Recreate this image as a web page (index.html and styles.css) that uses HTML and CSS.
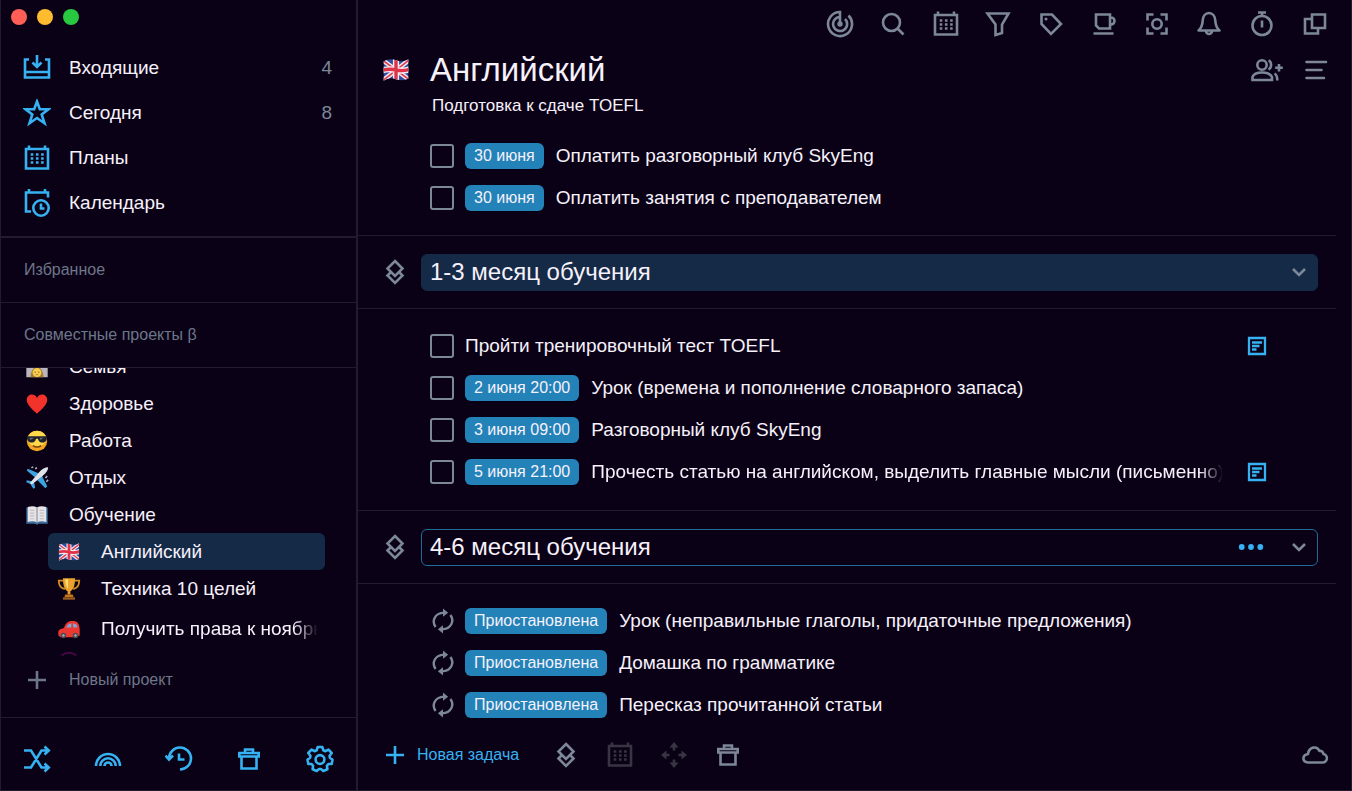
FILE: index.html
```html
<!DOCTYPE html>
<html lang="ru">
<head>
<meta charset="utf-8">
<title>Английский</title>
<link rel="stylesheet" href="styles.css">
</head>
<body>
<svg class="sprite" aria-hidden="true">
  <clipPath id="flag-shape"><path d="M3 6.500Q8 3.500 14 5.500T25 4.500V21.500Q20 24 14 22T3 23.500Z"/></clipPath>
  <symbol id="i-inbox" viewBox="0 0 28 28"><path d="M6 5.500H2V23.500H26V5.500H22M2 18H26M14 1V12.500M9.500 8.500L14 13L18.500 8.500"/></symbol>
  <symbol id="i-star" viewBox="0 0 28 28"><path d="M14 2.500L16.800 10.300H25.500L18.700 15.500L21.500 24.300L14 19L6.500 24.300L9.300 15.500L2.500 10.300H11.200Z"/></symbol>
  <symbol id="i-calendar" viewBox="0 0 28 28"><path d="M3 5H25V24.500H3ZM6 5V1.500M22 5V1.500"/><path d="M7.700 10.500H20.700M7.700 14.500H20.700M7.700 18.500H20.700" stroke-width="2.600" stroke-dasharray="2.600 2.600"/></symbol>
  <symbol id="i-calclock" viewBox="0 0 28 28"><path d="M8 22.500H3V3.500H25V8.500M6 3.500V0M22 3.500V0"/><circle cx="18" cy="19" r="7.700"/><path d="M18 14.500V19.500H21.500"/></symbol>
  <symbol id="i-plus" viewBox="0 0 28 28"><path d="M14 5V23M5 14H23"/></symbol>
  <symbol id="i-shuffle" viewBox="0 0 28 28"><path d="M1 5.500H8L18.500 22.500H26M1 22.500H8L18.500 5.500H26M21.500 1.500L25.700 5.500L21.500 9.500M21.500 18.500L25.700 22.500L21.500 26.500"/></symbol>
  <symbol id="i-rainbow" viewBox="0 0 28 28"><path d="M2 21A12 12 0 0 1 26 21M6.300 21A7.700 7.700 0 0 1 21.700 21M10.500 21A3.500 3.500 0 0 1 17.500 21"/></symbol>
  <symbol id="i-history" viewBox="0 0 28 28"><path d="M4 14A11 11 0 1 1 15 24.500M0.500 10.500L4 14.500L8 10.500M14 8.500V14.500H19.500"/></symbol>
  <symbol id="i-trash" viewBox="0 0 28 28"><path d="M10 7.500V4.500H18V7.500M4.300 8H23.700V11.500H4.300ZM6.500 12V23.500H21.500V12"/></symbol>
  <symbol id="i-gear" viewBox="0 0 28 28"><path d="M11.700 2H16.300L17.300 5.300L19.500 6.200L22.500 4.600L25.700 8L23.500 11L24 13L26.500 14.500L25.700 19H22.400L20.900 20.800L21.400 24.300L17.300 26L14.900 24H13.100L10.700 26L6.600 24.300L7.100 20.800L5.600 19H2.300L1.500 14.500L4 13L4.500 11L2.300 8L5.500 4.600L8.500 6.200L10.700 5.300Z" stroke-linejoin="round"/><circle cx="14" cy="14.500" r="4.400"/></symbol>
  <symbol id="i-target" viewBox="0 0 28 28"><path d="M14 14V2A12 12 0 1 0 22.500 5.500M14 7A7 7 0 1 0 19 9"/><circle cx="14" cy="14" r="2.700" fill="currentColor" stroke="none"/></symbol>
  <symbol id="i-search" viewBox="0 0 28 28"><circle cx="12.500" cy="12.500" r="8.500"/><path d="M18.500 18.500L24.500 24.500"/></symbol>
  <symbol id="i-filter" viewBox="0 0 28 28"><path d="M3.500 3.500H24.500L18 14.500V23L11.500 25V14.500Z"/></symbol>
  <symbol id="i-tag" viewBox="0 0 28 28"><path d="M4.500 4.500H15L24 14L14 24L4.500 14Z"/><circle cx="9" cy="9" r="1.500" fill="currentColor" stroke="none"/></symbol>
  <symbol id="i-cup" viewBox="0 0 28 28"><path d="M6 4.500H20V18.500H9L6 15.500ZM20 7.500H21A3.500 3.500 0 0 1 21 14.500H20M3.500 23.500H23.500"/></symbol>
  <symbol id="i-focus" viewBox="0 0 28 28"><path d="M4.500 10.500V4.500H10.500M17.500 4.500H23.500V10.500M23.500 17.500V23.500H17.500M10.500 23.500H4.500V17.500"/><circle cx="14" cy="14" r="4.700"/></symbol>
  <symbol id="i-bell" viewBox="0 0 28 28"><path d="M3.500 20.500H24.500C21 17.500 20.500 15 20.300 10.500C20 6 17.500 3 14 3S8 6 7.700 10.500C7.500 15 7 17.500 3.500 20.500ZM11 21A3 3 0 0 0 17 21" stroke-linejoin="round"/></symbol>
  <symbol id="i-timer" viewBox="0 0 28 28"><circle cx="14" cy="15.500" r="9.500"/><path d="M10 2.500H18M14 3V6M14 10.500V17.500"/></symbol>
  <symbol id="i-windows" viewBox="0 0 28 28"><path d="M11 4.500H24V18H11ZM11 9H4V23.500H17V18"/></symbol>
  <symbol id="i-people" viewBox="0 0 34 28"><circle cx="12" cy="9" r="4.700"/><path d="M2.500 24V21C4 17 8 16.500 12 16.500S20 17 22 21V24ZM18.500 4.500C22 5.500 22 12 18.500 13.500M24.500 17.500C27 19 27.300 21 27.300 24.500M29 8V15.500M25.200 11.700H32.800"/></symbol>
  <symbol id="i-lines" viewBox="0 0 28 28"><path d="M4.500 6H24M4.500 14H19.500M4.500 22H22" stroke-linecap="round"/></symbol>
  <symbol id="i-stack" viewBox="0 0 28 28"><path d="M14 3L21.500 10.500L14 18L6.500 10.500ZM9.500 14.500L6.500 17.500L14 25L21.500 17.500L18.500 14.500"/></symbol>
  <symbol id="i-chevron" viewBox="0 0 28 28"><path d="M8 11L14 17L20 11"/></symbol>
  <symbol id="i-note" viewBox="0 0 28 28"><path d="M6 6H22V22H6ZM9 10.500H19M9 14H16.500M9 17.500H13.500" stroke-width="2.300"/></symbol>
  <symbol id="i-dots" viewBox="0 0 28 28"><g fill="currentColor" stroke="none"><circle cx="4.700" cy="14" r="2.900"/><circle cx="14" cy="14" r="2.900"/><circle cx="23.300" cy="14" r="2.900"/></g></symbol>
  <symbol id="i-repeat" viewBox="0 0 28 28"><path d="M6 20.500C1.500 14 5 5.500 15 5M22 7.500C26.500 14 23 22.500 13 23"/><path d="M14 0.500L19.500 5L14 9.500ZM14 18.500L8.500 23L14 27.500Z" fill="currentColor" stroke="none"/></symbol>
  <symbol id="i-move" viewBox="0 0 28 28"><path d="M14 4V9.500M14 18.500V24M4 14H9.500M18.500 14H24"/><path d="M14 1L18.500 6.500H9.500ZM14 27L18.500 21.500H9.500ZM1 14L6.500 9.500V18.500ZM27 14L21.500 9.500V18.500Z" fill="currentColor" stroke="none"/></symbol>
  <symbol id="i-cloud" viewBox="0 0 28 28"><path d="M6.500 21.500H21.500A4.300 4.300 0 0 0 22.500 13C22 10.500 20 9.500 18.500 10C16 4.500 8 5.500 7 13C1 14 1 20.500 6.500 21.500Z" stroke-linejoin="round"/></symbol>

  <symbol id="e-flag" viewBox="0 0 28 28"><g clip-path="url(#flag-shape)"><path d="M1 2H27V26H1Z" fill="#2f4f9e" stroke="none"/><path d="M1 4.500L27 23.500M1 24.500L27 4" stroke="#eee6ef" stroke-width="4"/><path d="M1 4.500L27 23.500M1 24.500L27 4" stroke="#df3b4c" stroke-width="1.400"/><path d="M14 3V25M1 14.500Q8 12.500 14 14T27 13" stroke="#f4ecf2" stroke-width="5.400"/><path d="M14 3V25M1 14.500Q8 12.500 14 14T27 13" stroke="#df3347" stroke-width="3"/></g></symbol>
  <symbol id="e-family" viewBox="0 0 28 28"><g stroke="none"><path d="M2.500 3H25.500V25H2.500Z" fill="#b9b6bd"/><path d="M7 25Q8 14 14 14T21 25Z" fill="#a47a2b"/><circle cx="14" cy="20" r="4.800" fill="#f6cd4f"/><circle cx="12" cy="19.500" r=".7" fill="#704817"/><circle cx="16" cy="19.500" r=".7" fill="#704817"/><path d="M12 22Q14 23.500 16 22Z" fill="#a4522b"/></g></symbol>
  <symbol id="e-heart" viewBox="0 0 28 28"><path d="M14 24.500C9 20 3 15 3 9.500C3 3.500 11 1.500 14 7.500C17 1.500 25 3.500 25 9.500C25 15 19 20 14 24.500Z" fill="#f2332b" stroke="none"/></symbol>
  <symbol id="e-cool" viewBox="0 0 28 28"><g stroke="none"><circle cx="14" cy="14" r="11" fill="#f5a51f"/><ellipse cx="14" cy="11.500" rx="10" ry="8.500" fill="#ffd94a"/><path d="M3 9H25L24.500 12C23.500 17 16 17 15 11.500H13C12 17 4.500 17 3.500 12Z" fill="#20222b"/><path d="M6 10.500L11 10.500L6.500 13ZM17 10.500H21L17.500 13Z" fill="#65707f"/></g><path d="M9.500 19Q14 22 18.500 19" stroke="#7b3f12" stroke-width="1.600"/></symbol>
  <symbol id="e-plane" viewBox="0 0 28 28"><path d="M15.500 9L4 4L3 6L12 13.500ZM19.500 12L25 23L23 25L14.500 16.500ZM8 17.500L3 16.500L2.500 18.500L7 20.500L10 25.500L12 24.500L11 19.500Z" fill="#3ba5e2" stroke="none"/><path d="M26 2.500C22.500 2 19.500 4.500 16 8L7 18.500Q6 21.500 9 20.500L19.500 12.500C23 9 26 6.500 26 2.500Z" fill="#dfe2e9" stroke="none"/><path d="M12 4L14 3M8 3L10 2M24 18L26 16M23 14L25 12" stroke="#aab4c4" stroke-width="1.600"/></symbol>
  <symbol id="e-book" viewBox="0 0 28 28"><g stroke="none"><path d="M2.500 6H25.500V23.500H16L14 24.500L12 23.500H2.500Z" fill="#3b6f9c"/><path d="M4 5.500Q10 3.500 14 6Q18 3.500 24 5.500V21.500Q18 19.500 14 22Q10 19.500 4 21.500Z" fill="#e6e4e7"/></g><path d="M14 6V22" stroke="#9a9aa2" stroke-width="1.400"/><path d="M6.500 9H11M6.500 12H11M6.500 15H11M6.500 18H11M17 9H21.500M17 12H21.500M17 15H21.500M17 18H21.500" stroke="#c2c0c6" stroke-width="1.200"/></symbol>
  <symbol id="e-cup" viewBox="0 0 28 28"><path d="M8 5H3C3 10 5 13 9.500 14M20 5H25C25 10 23 13 18.500 14" stroke="#d18b22" stroke-width="2"/><g stroke="none"><path d="M7.500 2.500H20.500C20.500 10 19 15 15.500 16.500V20H12.500V16.500C9 15 7.500 10 7.500 2.500Z" fill="#e9a22e"/><path d="M10 3.500H13V14Q10 11 10 3.500Z" fill="#ffda70"/><path d="M10 20H18L19 23H9Z" fill="#c67617"/><path d="M7.500 23H20.500V25.500H7.500Z" fill="#9b5c20"/></g></symbol>
  <symbol id="e-car" viewBox="0 0 28 28"><g stroke="none"><path d="M2.500 17C3 14 7 13.500 8.500 13C11 7 13 5.500 18 5.500C23 5.500 25 8 25.500 14V21L21 23H5L2.500 21Z" fill="#ed3731"/><path d="M11 12.500C12.500 9 14 8 16.500 8V12.500ZM18.500 8C21.500 8 22.500 9 23 12.500H18.500Z" fill="#79a9d8"/><circle cx="8" cy="21" r="3" fill="#4a4b52"/><circle cx="21" cy="21" r="3" fill="#4a4b52"/><circle cx="8" cy="21" r="1.300" fill="#a9abb1"/><circle cx="21" cy="21" r="1.300" fill="#a9abb1"/></g></symbol>
  <symbol id="e-arc" viewBox="0 0 28 28"><path d="M6 8Q14 2 22 8" stroke="#4a0745" stroke-width="2"/></symbol>
</svg>

<div class="window">
  <aside class="sidebar">
    <div class="lights">
      <button class="light red" aria-label="Закрыть"></button>
      <button class="light yellow" aria-label="Свернуть"></button>
      <button class="light green" aria-label="Развернуть"></button>
    </div>
    <nav class="nav">
      <a class="nav-row" href="#inbox"><svg class="icon"><use href="#i-inbox"/></svg><span class="label">Входящие</span><span class="count">4</span></a>
      <a class="nav-row" href="#today"><svg class="icon"><use href="#i-star"/></svg><span class="label">Сегодня</span><span class="count">8</span></a>
      <a class="nav-row" href="#plans"><svg class="icon"><use href="#i-calendar"/></svg><span class="label">Планы</span></a>
      <a class="nav-row" href="#calendar"><svg class="icon"><use href="#i-calclock"/></svg><span class="label">Календарь</span></a>
    </nav>
    <h2 class="group">Избранное</h2>
    <h2 class="group">Совместные проекты β</h2>
    <div class="projects">
      <a class="project" href="#family"><svg class="icon emoji"><use href="#e-family"/></svg><span class="label">Семья</span></a>
      <a class="project" href="#health"><svg class="icon emoji"><use href="#e-heart"/></svg><span class="label">Здоровье</span></a>
      <a class="project" href="#work"><svg class="icon emoji"><use href="#e-cool"/></svg><span class="label">Работа</span></a>
      <a class="project" href="#rest"><svg class="icon emoji"><use href="#e-plane"/></svg><span class="label">Отдых</span></a>
      <a class="project" href="#study"><svg class="icon emoji"><use href="#e-book"/></svg><span class="label">Обучение</span></a>
      <a class="project child selected" href="#english"><svg class="icon emoji"><use href="#e-flag"/></svg><span class="label">Английский</span></a>
      <a class="project child" href="#goals"><svg class="icon emoji"><use href="#e-cup"/></svg><span class="label">Техника 10 целей</span></a>
      <a class="project child spaced" href="#license"><svg class="icon emoji"><use href="#e-car"/></svg><span class="label fade">Получить права к ноябрю</span></a>
      <a class="project child" href="#next" aria-label="Проект"><svg class="icon emoji"><use href="#e-arc"/></svg></a>
    </div>
    <button class="new-project"><svg class="icon"><use href="#i-plus"/></svg>Новый проект</button>
    <div class="side-tools">
      <button aria-label="Перемешать"><svg class="icon"><use href="#i-shuffle"/></svg></button>
      <button aria-label="Радуга"><svg class="icon"><use href="#i-rainbow"/></svg></button>
      <button aria-label="История"><svg class="icon"><use href="#i-history"/></svg></button>
      <button aria-label="Корзина"><svg class="icon"><use href="#i-trash"/></svg></button>
      <button aria-label="Настройки"><svg class="icon"><use href="#i-gear"/></svg></button>
    </div>
  </aside>

  <main class="main">
    <div class="toolbar">
      <button aria-label="Фокус"><svg class="icon"><use href="#i-target"/></svg></button>
      <button aria-label="Поиск"><svg class="icon"><use href="#i-search"/></svg></button>
      <button aria-label="Дата"><svg class="icon"><use href="#i-calendar"/></svg></button>
      <button aria-label="Фильтр"><svg class="icon"><use href="#i-filter"/></svg></button>
      <button aria-label="Метки"><svg class="icon"><use href="#i-tag"/></svg></button>
      <button aria-label="Перерыв"><svg class="icon"><use href="#i-cup"/></svg></button>
      <button aria-label="Концентрация"><svg class="icon"><use href="#i-focus"/></svg></button>
      <button aria-label="Уведомления"><svg class="icon"><use href="#i-bell"/></svg></button>
      <button aria-label="Таймер"><svg class="icon"><use href="#i-timer"/></svg></button>
      <button aria-label="Окна"><svg class="icon"><use href="#i-windows"/></svg></button>
    </div>
    <header class="header">
      <svg class="icon flag"><use href="#e-flag"/></svg>
      <h1>Английский</h1>
      <button aria-label="Участники"><svg class="icon wide"><use href="#i-people"/></svg></button>
      <button aria-label="Меню"><svg class="icon"><use href="#i-lines"/></svg></button>
    </header>
    <p class="subtitle">Подготовка к сдаче TOEFL</p>

    <ul class="tasks first">
      <li><label class="task"><input type="checkbox"><span class="badge">30 июня</span><span class="text">Оплатить разговорный клуб SkyEng</span></label></li>
      <li><label class="task"><input type="checkbox"><span class="badge">30 июня</span><span class="text">Оплатить занятия с преподавателем</span></label></li>
    </ul>
    <section class="stage">
      <svg class="icon"><use href="#i-stack"/></svg>
      <div class="stage-box filled"><h2>1-3 месяц обучения</h2><button aria-label="Свернуть раздел"><svg class="icon"><use href="#i-chevron"/></svg></button></div>
    </section>
    <ul class="tasks">
      <li><label class="task"><input type="checkbox"><span class="text plain">Пройти тренировочный тест TOEFL</span></label><button class="note" aria-label="Заметка"><svg class="icon"><use href="#i-note"/></svg></button></li>
      <li><label class="task"><input type="checkbox"><span class="badge">2 июня 20:00</span><span class="text">Урок (времена и пополнение словарного запаса)</span></label></li>
      <li><label class="task"><input type="checkbox"><span class="badge">3 июня 09:00</span><span class="text">Разговорный клуб SkyEng</span></label></li>
      <li><label class="task"><input type="checkbox"><span class="badge">5 июня 21:00</span><span class="text fade">Прочесть статью на английском, выделить главные мысли (письменно)</span></label><button class="note" aria-label="Заметка"><svg class="icon"><use href="#i-note"/></svg></button></li>
    </ul>
    <section class="stage">
      <svg class="icon"><use href="#i-stack"/></svg>
      <div class="stage-box outlined"><h2>4-6 месяц обучения</h2><button class="more" aria-label="Ещё"><svg class="icon"><use href="#i-dots"/></svg></button><button aria-label="Свернуть раздел"><svg class="icon"><use href="#i-chevron"/></svg></button></div>
    </section>
    <ul class="tasks last">
      <li><div class="task"><svg class="icon repeat"><use href="#i-repeat"/></svg><span class="badge">Приостановлена</span><span class="text">Урок (неправильные глаголы, придаточные предложения)</span></div></li>
      <li><div class="task"><svg class="icon repeat"><use href="#i-repeat"/></svg><span class="badge">Приостановлена</span><span class="text">Домашка по грамматике</span></div></li>
      <li><div class="task"><svg class="icon repeat"><use href="#i-repeat"/></svg><span class="badge">Приостановлена</span><span class="text">Пересказ прочитанной статьи</span></div></li>
    </ul>

    <footer class="footer">
      <button class="new-task"><svg class="icon"><use href="#i-plus"/></svg>Новая задача</button>
      <button aria-label="Раздел"><svg class="icon"><use href="#i-stack"/></svg></button>
      <button aria-label="Дата" disabled><svg class="icon"><use href="#i-calendar"/></svg></button>
      <button aria-label="Переместить" disabled><svg class="icon"><use href="#i-move"/></svg></button>
      <button aria-label="Удалить"><svg class="icon"><use href="#i-trash"/></svg></button>
      <button class="cloud" aria-label="Синхронизация"><svg class="icon"><use href="#i-cloud"/></svg></button>
    </footer>
  </main>
</div>
</body>
</html>
```
FILE: styles.css
```css
:root {
  --bg: #0b0116;
  --line: #221a2e;
  --blue: #36b1f2;
  --grey: #7c8798;
  --muted: #6c7789;
  --text: #f6f1fb;
  --select: #152a47;
}
* { box-sizing: border-box; }
body {
  margin: 0;
  background: var(--bg);
  color: var(--text);
  font: 19px/24px "Liberation Sans", Arial, sans-serif;
}
h1, h2, p, ul { margin: 0; padding: 0; font-weight: 400; }
ul { list-style: none; }
a { color: inherit; text-decoration: none; }
button {
  display: flex;
  align-items: center;
  padding: 0;
  border: 0;
  background: none;
  color: inherit;
  font: inherit;
}
.sprite { position: absolute; width: 0; height: 0; }
.icon {
  display: block;
  flex: none;
  width: 28px;
  height: 28px;
  fill: none;
  stroke: currentColor;
  stroke-width: 2.6;
}
.fade {
  overflow: hidden;
  white-space: nowrap;
  mask-image: linear-gradient(to left, transparent, #000 24px);
}

.window {
  display: flex;
  height: 100vh;
  border: 1px solid var(--line);
  border-top: 0;
}
.sidebar {
  display: flex;
  flex-direction: column;
  flex: none;
  width: 357px;
  border-right: 2px solid var(--line);
}
.lights { display: flex; gap: 10px; padding: 9px 10px 20px; }
.light { width: 16px; height: 16px; border-radius: 50%; }
.red { background: #ff5f57; }
.yellow { background: #febc2e; }
.green { background: #28c840; }

.nav { padding-bottom: 11px; border-bottom: 2px solid var(--line); }
.nav-row {
  display: flex;
  align-items: center;
  gap: 18px;
  height: 45px;
  padding: 0 24px 0 22px;
}
.nav-row .icon { color: var(--blue); }
.label { flex: 1; }
.count { color: var(--grey); }
.group {
  flex: none;
  padding: 20px 23px;
  border-bottom: 1px solid var(--line);
  color: var(--muted);
  font-size: 16px;
}
.projects {
  display: flex;
  flex: 1;
  flex-direction: column;
  justify-content: flex-end;
  min-height: 0;
  overflow: hidden;
  margin-bottom: 4px;
}
.project {
  display: flex;
  flex: none;
  align-items: center;
  gap: 18px;
  height: 37px;
  padding-left: 22px;
}
.emoji { padding: 1px; }
.child {
  margin: 0 31px 0 47px;
  padding: 0 7px;
  border-radius: 6px;
}
.spaced { margin-top: 3px; }
.project:last-child { height: 10px; align-items: flex-start; }
.selected { background: var(--select); }
.new-project {
  gap: 18px;
  height: 38px;
  margin-bottom: 18px;
  padding-left: 22px;
  color: var(--muted);
  font-size: 16px;
}
.side-tools {
  display: flex;
  justify-content: space-between;
  padding: 27px 22px 17px;
  border-top: 1px solid var(--line);
  color: var(--blue);
}

.main { display: flex; flex: 1; flex-direction: column; min-width: 0; }
.toolbar {
  display: flex;
  justify-content: space-between;
  align-self: flex-end;
  width: 503px;
  margin-right: 22px;
  padding-top: 10px;
  color: var(--grey);
}
.header {
  display: flex;
  align-items: center;
  height: 40px;
  margin-top: 12px;
  padding: 0 21px 0 22px;
  color: var(--grey);
}
.flag { width: 32px; height: 32px; }
.header h1 {
  flex: 1;
  margin-left: 18px;
  color: var(--text);
  font-size: 33px;
  line-height: 40px;
}
.wide { width: 34px; margin-right: 18px; }
.subtitle { padding: 4px 0 0 74px; font-size: 17px; }
.tasks { padding: 16px 94px 17px 72px; }
.first { padding-top: 17px; padding-bottom: 16px; }
.tasks li {
  display: flex;
  align-items: center;
  justify-content: space-between;
  height: 42px;
}
.task { display: flex; align-items: center; min-width: 0; }
.task input {
  flex: none;
  width: 24px;
  height: 24px;
  margin: 0 11px 0 0;
  appearance: none;
  border: 2px solid var(--grey);
  border-radius: 3px;
}
.repeat { width: 26px; height: 28px; margin-right: 9px; color: var(--grey); }
.badge {
  flex: none;
  padding: 1px 9px;
  border-radius: 6px;
  background: #2382b8;
  font-size: 16px;
}
.text { margin-left: 12px; white-space: nowrap; }
.plain { margin-left: 0; }
.note { margin: 0 -14px 0 20px; color: var(--blue); }
.stage {
  display: flex;
  align-items: center;
  gap: 12px;
  height: 74px;
  margin-right: 15px;
  padding: 0 18px 0 23px;
  border: solid var(--line);
  border-width: 1px 0;
  color: var(--grey);
}
.stage-box {
  display: flex;
  flex: 1;
  align-items: center;
  gap: 20px;
  height: 37px;
  padding: 0 4px 0 8px;
  border: 1px solid transparent;
  border-radius: 6px;
}
.stage-box h2 { flex: 1; color: var(--text); font-size: 24px; }
.filled { border-color: var(--select); background: var(--select); }
.outlined { border-color: #206a96; }
.more { color: var(--blue); }
.last { flex: 1; min-height: 0; overflow: hidden; padding-bottom: 0; }
.footer {
  display: flex;
  align-items: center;
  gap: 26px;
  height: 71px;
  padding: 0 22px 0 23px;
  color: var(--grey);
}
.new-task { gap: 8px; margin-right: 7px; color: var(--blue); font-size: 16px; }
.footer button:disabled { color: #393444; }
.cloud { margin-left: auto; }
```
